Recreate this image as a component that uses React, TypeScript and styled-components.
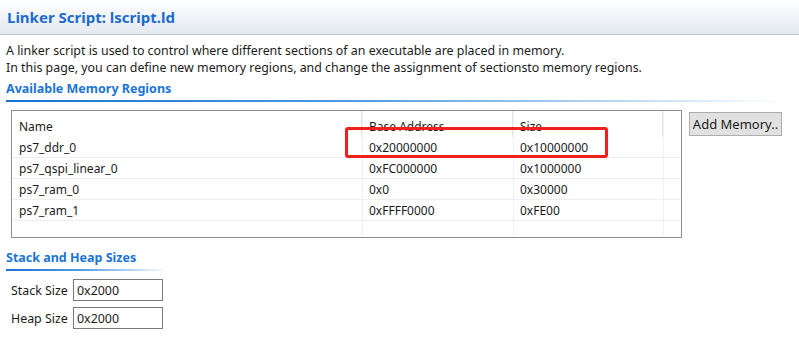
import React from "react";
import styled, { createGlobalStyle } from "styled-components";

const Global = createGlobalStyle`
  html, body { margin: 0; padding: 0; background: #fff; }
  body {
    font-family: "Noto Sans", "Liberation Sans", sans-serif;
    font-size: 12px;
    color: #1b1b1b;
  }
`;

const Page = styled.div`
  width: 799px;
  height: 337px;
  overflow: hidden;
  background: #fff;
`;

const TitleBar = styled.div`
  height: 34px;
  border-bottom: 1px solid #b9c7d7;
  background: linear-gradient(to bottom, #ffffff 0%, #f3f5f9 45%, #e3e8f0 100%);
  display: flex;
  align-items: center;
  padding-left: 7px;
`;

const Title = styled.h1`
  margin: 0;
  font-size: 15px;
  font-weight: 700;
  color: #1d6bce;
`;

const Body = styled.div`
  padding: 7px 6px 0 6px;
  display: flex;
  flex-direction: column;
`;

const Desc = styled.p`
  margin: 0;
  line-height: 17px;
  font-size: 12.4px;
`;

const SectionHead = styled.div<{ $w: number; $mt: number }>`
  margin-top: ${(p) => p.$mt}px;
  width: ${(p) => p.$w}px;
  font-weight: 700;
  font-size: 12.5px;
  color: #1a74d6;
  line-height: 17px;
  padding-bottom: 3px;
  border-bottom: 2px solid transparent;
  border-image: linear-gradient(to right, #1672d4 0%, #4f9be2 45%, #bcd9f3 80%, rgba(255,255,255,0) 100%) 1;
`;

const RegionRow = styled.div`
  display: flex;
  align-items: flex-start;
  margin-top: 8px;
  padding-left: 5px;
  gap: 7px;
`;

const TableWrap = styled.div`
  position: relative;
  width: 669px;
  height: 126px;
  border: 1px solid #8a8e95;
`;

const Grid = styled.div`
  display: grid;
  grid-template-columns: 350px 151px 150px 18px;
  grid-template-rows: 26px repeat(4, 21px) 1fr;
  height: 100%;
  background:
    linear-gradient(#eef3fb, #eef3fb) 350px 0 / 1px 100% no-repeat,
    linear-gradient(#eef3fb, #eef3fb) 501px 0 / 1px 100% no-repeat,
    linear-gradient(#eef3fb, #eef3fb) 651px 0 / 1px 100% no-repeat;
`;

const HeadCell = styled.div<{ $div?: boolean }>`
  display: flex;
  align-items: center;
  padding: 4px 0 0 7px;
  border-right: ${(p) => (p.$div ? "1px solid #e3e3e3" : "none")};
  white-space: nowrap;
  overflow: hidden;
`;

const Cell = styled.div`
  display: flex;
  align-items: center;
  padding-left: 7px;
  border-bottom: 1px solid #eeeeee;
  white-space: nowrap;
`;

const EmptyCell = styled.div``;

const Highlight = styled.div`
  position: absolute;
  left: 333px;
  top: 16px;
  width: 257px;
  height: 25px;
  border: 3px solid #f0201c;
  border-radius: 3px;
  pointer-events: none;
`;

const Button = styled.button`
  width: 93px;
  height: 24px;
  margin-top: 2px;
  padding: 0;
  background: #e1e1e1;
  border: 1px solid #adadad;
  font-family: inherit;
  font-size: 13px;
  color: #1b1b1b;
`;

const FieldRow = styled.div<{ $mt: number }>`
  display: flex;
  align-items: center;
  margin-top: ${(p) => p.$mt}px;
  padding-left: 5px;
`;

const Label = styled.label`
  width: 62px;
  font-size: 12.4px;
`;

const Input = styled.div`
  box-sizing: border-box;
  width: 90px;
  height: 22px;
  border: 1px solid #7a7a7a;
  display: flex;
  align-items: center;
  padding-left: 3px;
  font-size: 12.4px;
`;

const regions = [
  ["ps7_ddr_0", "0x20000000", "0x10000000"],
  ["ps7_qspi_linear_0", "0xFC000000", "0x1000000"],
  ["ps7_ram_0", "0x0", "0x30000"],
  ["ps7_ram_1", "0xFFFF0000", "0xFE00"],
];

export default function App() {
  return (
    <Page>
      <Global />
      <TitleBar>
        <Title>Linker Script: lscript.ld</Title>
      </TitleBar>
      <Body>
        <Desc>A linker script is used to control where different sections of an executable are placed in memory.</Desc>
        <Desc>In this page, you can define new memory regions, and change the assignment of sectionsto memory regions.</Desc>
        <SectionHead $w={774} $mt={4}>Available Memory Regions</SectionHead>
        <RegionRow>
          <TableWrap>
            <Grid>
              <HeadCell $div>Name</HeadCell>
              <HeadCell $div>Base Address</HeadCell>
              <HeadCell $div>Size</HeadCell>
              <HeadCell />
              {regions.map((r) => (
                <React.Fragment key={r[0]}>
                  <Cell>{r[0]}</Cell>
                  <Cell>{r[1]}</Cell>
                  <Cell>{r[2]}</Cell>
                  <Cell />
                </React.Fragment>
              ))}
              <EmptyCell />
            </Grid>
            <Highlight />
          </TableWrap>
          <Button>Add Memory..</Button>
        </RegionRow>
        <SectionHead $w={160} $mt={11}>Stack and Heap Sizes</SectionHead>
        <FieldRow $mt={8}>
          <Label>Stack Size</Label>
          <Input>0x2000</Input>
        </FieldRow>
        <FieldRow $mt={6}>
          <Label>Heap Size</Label>
          <Input>0x2000</Input>
        </FieldRow>
      </Body>
    </Page>
  );
}
